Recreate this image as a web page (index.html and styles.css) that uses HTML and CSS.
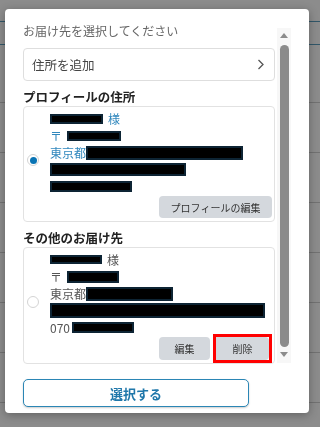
FILE: index.html
```html
<!DOCTYPE html>
<html lang="ja">
<head>
    <meta charset="UTF-8">
    <meta name="viewport" content="width=device-width, initial-scale=1.0">
    <title>お届け先を選択</title>
    <link rel="stylesheet" href="styles.css">
</head>
<body>
    <div class="page-behind">
        <div class="row row-accent"></div>
        <div class="row row-accent short"></div>
        <div class="row tall"></div>
        <div class="row"></div>
        <div class="row"></div>
        <div class="row"></div>
        <div class="row"></div>
        <div class="row"></div>
        <div class="row"></div>
    </div>
    <div class="overlay"></div>

    <div class="modal">
        <div class="modal-body">
            <div class="scroll-content">
                <p class="lead">お届け先を選択してください</p>

                <a class="add-address" href="#">
                    <span>住所を追加</span>
                    <svg width="8" height="11" viewBox="0 0 8 11">
                        <polyline points="1.5,1 6,5.5 1.5,10" fill="none" stroke="#555" stroke-width="1.3"/>
                    </svg>
                </a>

                <h2 class="section-title">プロフィールの住所</h2>
                <div class="address-card selected">
                    <span class="radio"></span>
                    <div class="address-info">
                        <div class="line"><span class="redact" style="width: 53px; height: 10px"></span><span class="gap"></span>様</div>
                        <div class="line">〒<span class="gap"></span><span class="redact" style="width: 54px; height: 10px"></span></div>
                        <div class="line">東京都<span class="redact" style="width: 157px; height: 14px"></span></div>
                        <div class="line"><span class="redact" style="width: 136px; height: 13px"></span></div>
                        <div class="line"><span class="redact" style="width: 82px; height: 11px"></span></div>
                        <div class="card-actions">
                            <button class="btn-sub wide">プロフィールの編集</button>
                        </div>
                    </div>
                </div>

                <h2 class="section-title">その他のお届け先</h2>
                <div class="address-card">
                    <span class="radio"></span>
                    <div class="address-info">
                        <div class="line"><span class="redact" style="width: 52px; height: 9px"></span><span class="gap"></span>様</div>
                        <div class="line">〒<span class="gap"></span><span class="redact" style="width: 52px; height: 12px"></span></div>
                        <div class="line">東京都<span class="redact" style="width: 87px; height: 14px"></span></div>
                        <div class="line"><span class="redact" style="width: 215px; height: 15px"></span></div>
                        <div class="line">070<span class="gap small"></span><span class="redact" style="width: 62px; height: 11px"></span></div>
                        <div class="card-actions">
                            <button class="btn-sub">編集</button>
                            <span class="mark"><button class="btn-sub">削除</button></span>
                        </div>
                    </div>
                </div>
            </div>

            <div class="scrollbar">
                <span class="arrow up"></span>
                <span class="thumb"></span>
                <span class="arrow down"></span>
            </div>
        </div>

        <button class="btn-select">選択する</button>
    </div>
</body>
</html>
```

FILE: styles.css
```css
* {
    box-sizing: border-box;
}

body {
    margin: 0;
    font-family: "Noto Sans CJK JP", "Noto Sans", sans-serif;
    background-color: #fff;
    color: #333;
    height: 427px;
    overflow: hidden;
}

/* page under the dimmed overlay */
.page-behind .row {
    height: 50px;
    border-bottom: 1px solid #d0d0d0;
}

.page-behind .row-accent {
    height: 22px;
    border-bottom: 1px solid #5a9fc0;
}

.page-behind .row-accent.short {
    height: 23px;
}

.page-behind .row.tall {
    height: 58px;
}

.overlay {
    position: fixed;
    inset: 0;
    background-color: rgba(0, 0, 0, 0.45);
}

.modal {
    position: absolute;
    left: 5px;
    top: 9px;
    width: 304px;
    height: 404px;
    padding: 14px 0 6px 18px;
    background-color: #fff;
    border-radius: 4px;
    box-shadow: 0 2px 10px rgba(0, 0, 0, 0.3);
}

.modal-body {
    display: flex;
    gap: 2px;
    height: 340px;
}

.scroll-content {
    width: 252px;
}

.lead {
    margin: 0 0 9px;
    font-size: 12px;
    line-height: 16px;
    color: #666;
}

.add-address {
    display: flex;
    justify-content: space-between;
    align-items: center;
    height: 33px;
    padding: 0 9px 0 8px;
    border: 1px solid #dedede;
    border-radius: 4px;
    font-size: 12.5px;
    color: #444;
    text-decoration: none;
}

.section-title {
    margin: 7px 0 0;
    font-size: 12.5px;
    line-height: 18px;
    font-weight: bold;
    color: #222;
}

.address-card {
    display: flex;
    padding: 3px 2px 3px 3px;
    border: 1px solid #e2e2e2;
    border-radius: 4px;
    color: #555;
}

.address-card.selected {
    color: #2f87bd;
}

.radio {
    flex: none;
    align-self: center;
    width: 12px;
    height: 12px;
    margin: 0 11px 8px 0;
    border: 1px solid #d4d4d4;
    border-radius: 50%;
    background-color: #fff;
    position: relative;
}

.selected .radio::after {
    content: "";
    position: absolute;
    left: 1.5px;
    top: 1.5px;
    width: 7px;
    height: 7px;
    border-radius: 50%;
    background-color: #0a74b4;
}

.address-info {
    flex: 1;
}

.line {
    display: flex;
    align-items: center;
    height: 17px;
    font-size: 12px;
    line-height: 14px;
    white-space: nowrap;
}

.redact {
    display: inline-block;
    background-color: #000;
    border: 2px solid #0d2434;
}

.gap {
    display: inline-block;
    width: 5px;
}

.gap.small {
    width: 2px;
}

.card-actions {
    display: flex;
    justify-content: flex-end;
    gap: 6px;
    margin-top: 1px;
}

.btn-sub {
    display: block;
    width: 51px;
    height: 23px;
    padding: 0;
    border: none;
    border-radius: 4px;
    background-color: #d4d8dd;
    font-family: inherit;
    font-size: 10px;
    color: #333;
}

.btn-sub.wide {
    width: 113px;
    height: 22px;
}

/* red annotation box round the delete button */
.mark {
    margin: -3px 0 -3px -3px;
    border: 3px solid #f00;
}

.mark .btn-sub {
    width: 53px;
    border-radius: 0 4px 4px 0;
}

.scrollbar {
    display: flex;
    flex-direction: column;
    align-items: center;
    width: 14px;
    height: 335px;
    margin-top: 5px;
    padding: 5px 0 6px;
    background-color: #f7f7f7;
}

.scrollbar .thumb {
    flex: 1;
    width: 9px;
    margin: 7px 0 5px;
    border-radius: 5px;
    background-color: #8b8b8b;
}

.arrow {
    width: 0;
    height: 0;
    border-left: 4px solid transparent;
    border-right: 4px solid transparent;
}

.arrow.up {
    border-bottom: 5px solid #8b8b8b;
}

.arrow.down {
    border-top: 5px solid #8b8b8b;
}

.btn-select {
    display: block;
    width: 226px;
    height: 28px;
    margin-top: 16px;
    border: 1.5px solid #2b86b5;
    border-radius: 5px;
    background-color: #fff;
    box-shadow: 0 1px 2px rgba(0, 0, 0, 0.2);
    font-family: inherit;
    font-size: 13px;
    font-weight: bold;
    color: #1f77aa;
}
```
